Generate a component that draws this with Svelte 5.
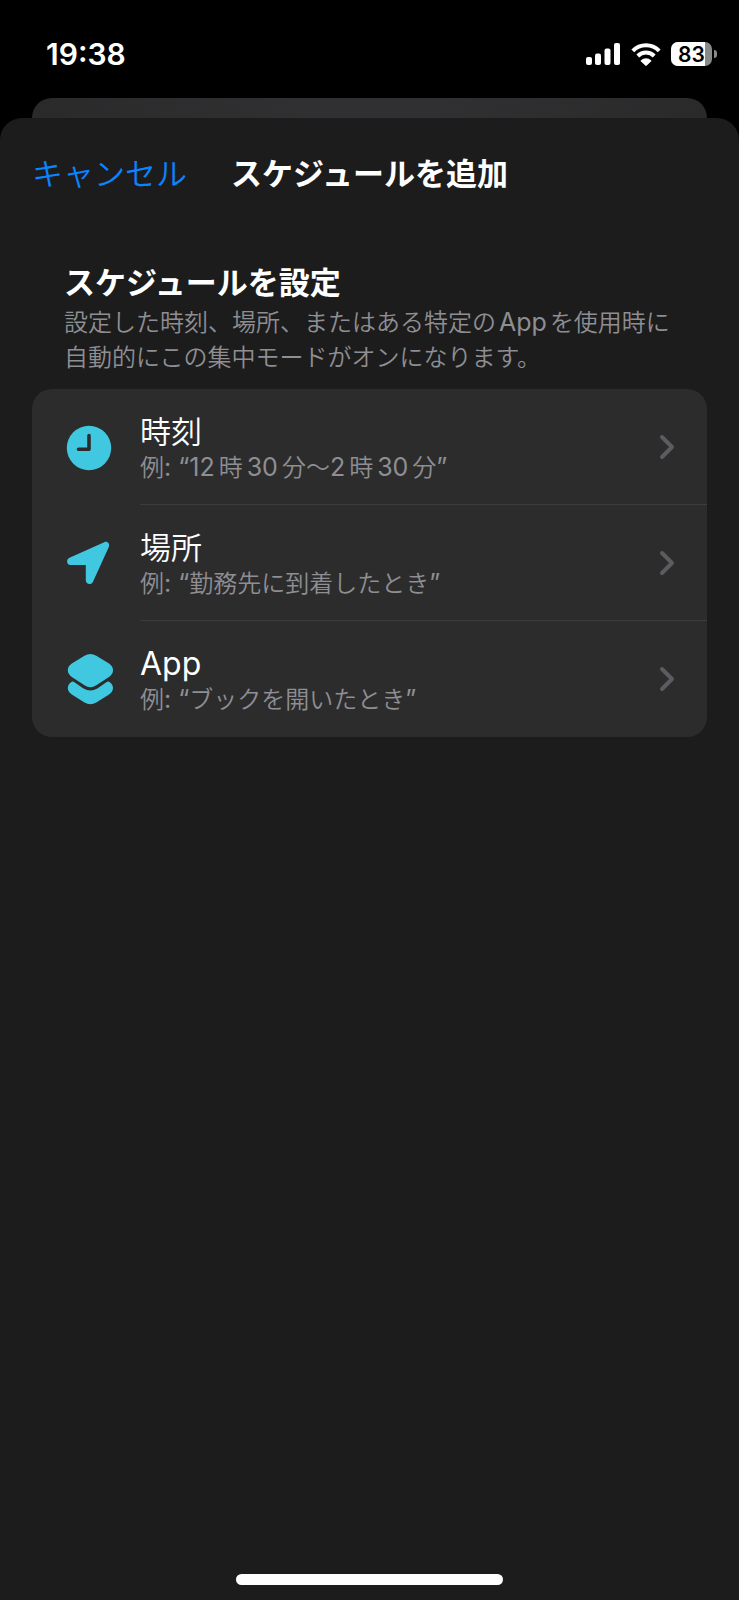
<script lang="ts">
  type Part = { text: string; latin?: boolean; gap?: 'none' | 'after' };
  type Row = { icon: 'clock' | 'location' | 'app'; title: string; latin?: boolean; example: Part[] };

  const time = '19:38';
  const battery = 83;

  // latin runs are set a little larger than the kana and kanji around them
  const rows: Row[] = [
    {
      icon: 'clock',
      title: '時刻',
      example: [
        { text: '例' },
        { text: ': “12', latin: true, gap: 'after' },
        { text: '時' },
        { text: '30', latin: true },
        { text: '分〜' },
        { text: '2', latin: true, gap: 'after' },
        { text: '時' },
        { text: '30', latin: true },
        { text: '分' },
        { text: '”', latin: true, gap: 'none' }
      ]
    },
    {
      icon: 'location',
      title: '場所',
      example: [
        { text: '例' },
        { text: ': “', latin: true, gap: 'none' },
        { text: '勤務先に到着したとき' },
        { text: '”', latin: true, gap: 'none' }
      ]
    },
    {
      icon: 'app',
      title: 'App',
      latin: true,
      example: [
        { text: '例' },
        { text: ': “', latin: true, gap: 'none' },
        { text: 'ブックを開いたとき' },
        { text: '”', latin: true, gap: 'none' }
      ]
    }
  ];
</script>

<div class="screen" lang="ja">
  <header class="status-bar">
    <span class="clock">{time}</span>
    <div class="indicators">
      <svg class="signal" viewBox="0 0 35 22" aria-hidden="true">
        <rect x="0" y="14" width="6" height="8" rx="2" />
        <rect x="9" y="10.500" width="6" height="11.500" rx="2" />
        <rect x="18.500" y="5.500" width="6" height="16.500" rx="2" />
        <rect x="28" y="0" width="6" height="22" rx="2" />
      </svg>
      <svg class="wifi" viewBox="0 0 30 23" aria-hidden="true">
        <path d="M1.800 7.800a18.500 18.500 0 0 1 26.400 0" />
        <path d="M6.800 13a11.500 11.500 0 0 1 16.400 0" />
        <path class="dot" d="M10 17.300a7.300 7.300 0 0 1 10 0q.6.6 0 1.200l-4.300 4.100q-.7.6-1.400 0L10 18.500q-.6-.6 0-1.200z" />
      </svg>
      <div class="battery">
        <div class="battery-body">
          <div class="battery-fill" style="width: {battery}%"></div>
          <span class="battery-level">{battery}</span>
        </div>
        <div class="battery-tip"></div>
      </div>
    </div>
  </header>

  <div class="sheet-behind"></div>

  <main class="sheet">
    <nav class="nav">
      <button type="button" class="cancel">キャンセル</button>
      <h1>スケジュールを追加</h1>
    </nav>

    <section class="intro">
      <h2>スケジュールを設定</h2>
      <p>設定した時刻、場所、またはある特定の<span class="latin">App</span>を使用時に<br />自動的にこの集中モードがオンになります。</p>
    </section>

    <ul class="list">
      {#each rows as row}
        <li>
          <button type="button" class="row">
            <span class="row-icon">
              {#if row.icon === 'clock'}
                <svg viewBox="0 0 48 52" aria-hidden="true">
                  <circle cx="23" cy="27" r="22.200" />
                  <path class="hands" d="M23 14.500V28.200H12.500" />
                </svg>
              {:else if row.icon === 'location'}
                <svg viewBox="0 0 48 52" aria-hidden="true">
                  <path d="M38.200 5.200 3.500 20.700C-.3 22.500.7 28 4.500 28H19.800V43.300C19.800 47.500 25.200 48.500 27 44.800L42.700 10.200C44.200 6.700 41.500 3.700 38.200 5.200Z" />
                </svg>
              {:else}
                <svg viewBox="0 0 48 52" aria-hidden="true">
                  <path d="M18.500 2.800Q24.400-.8 30.300 2.800L43 10.500Q47 13.200 47 17.300Q47 21.200 43 23.900L30.300 32.300Q24.400 36 18.500 32.300L5.800 23.900Q1.800 21.200 1.800 17.300Q1.800 13.200 5.800 10.500Z" />
                  <path d="M5.800 28.700Q7.200 28.300 8.800 29.500L17.500 35.500Q24.400 39.700 31.300 35.500L40 29.500Q41.600 28.300 43 28.700Q47 31 47 35Q47 38.700 43 41.500L30.300 49.500Q24.400 53 18.500 49.500L5.800 41.500Q1.800 38.700 1.800 35Q1.800 31 5.800 28.700Z" />
                </svg>
              {/if}
            </span>
            <span class="row-body">
              <span class="row-text">
                <span class="row-title"><span class:title-latin={row.latin}>{row.title}</span></span>
                <span class="row-example">{#each row.example as part}<span class:latin={part.latin} class:gap-none={part.gap === 'none'} class:gap-after={part.gap === 'after'}>{part.text}</span>{/each}</span>
              </span>
              <svg class="chevron" viewBox="0 0 16 26" aria-hidden="true">
                <path d="M3 3 13 13 3 23" />
              </svg>
            </span>
          </button>
        </li>
      {/each}
    </ul>

    <div class="home-indicator"></div>
  </main>
</div>

<style>
  :global(body) {
    background: #000;
  }

  .screen {
    display: flex;
    flex-direction: column;
    min-height: 100vh;
    background: #000;
    color: #fff;
    font-family: "Noto Sans CJK JP", sans-serif;
  }

  h1,
  h2,
  p,
  ul {
    margin: 0;
    padding: 0;
  }

  button {
    margin: 0;
    padding: 0;
    border: 0;
    background: none;
    color: inherit;
    font: inherit;
    text-align: left;
    cursor: pointer;
  }

  /* status bar */
  .status-bar {
    display: flex;
    align-items: center;
    justify-content: space-between;
    box-sizing: border-box;
    height: 98px;
    padding: 10px 22px 0 46px;
  }

  .clock {
    font: 600 30px/36px Inter, sans-serif;
  }

  .indicators {
    display: flex;
    align-items: center;
    gap: 10px;
  }

  .signal {
    width: 35px;
    height: 22px;
    fill: #fff;
  }

  .wifi {
    width: 30px;
    height: 23px;
    fill: none;
    stroke: #fff;
    stroke-width: 4;
  }

  .wifi .dot {
    fill: #fff;
    stroke: none;
  }

  .battery {
    display: flex;
    align-items: center;
    gap: 2px;
  }

  .battery-body {
    position: relative;
    width: 41px;
    height: 24px;
    border-radius: 7px;
    background: #8a8a8a;
    overflow: hidden;
  }

  .battery-fill {
    height: 100%;
    background: #fff;
  }

  .battery-level {
    position: absolute;
    inset: 0;
    color: #000;
    font: 600 21px/26px Inter, sans-serif;
    text-align: center;
  }

  .battery-tip {
    width: 3px;
    height: 8px;
    border-radius: 0 4px 4px 0;
    background: #8a8a8a;
  }

  /* sheets */
  .sheet-behind {
    height: 20px;
    margin: 0 32px;
    border-radius: 20px 20px 0 0;
    background: linear-gradient(90deg, #2a2a2b, #303032 40%, #303032 60%, #2a2a2b);
  }

  .sheet {
    display: flex;
    flex: 1;
    flex-direction: column;
    border-radius: 22px 22px 0 0;
    background: #1c1c1c;
  }

  .nav {
    display: grid;
    grid-template-columns: 1fr auto 1fr;
    align-items: center;
    height: 108px;
    padding: 0 32px;
  }

  .cancel {
    justify-self: start;
    color: #0a84ff;
    font-size: 31px;
    font-weight: 350;
    line-height: 40px;
    white-space: nowrap;
  }

  h1,
  h2 {
    font-size: 31px;
    font-weight: 700;
    line-height: 40px;
    white-space: nowrap;
  }

  .intro {
    padding: 35px 64px 16px;
  }

  .intro p {
    margin-top: 2px;
    color: #8e8e93;
    font-size: 24px;
    font-weight: 350;
    line-height: 35px;
  }

  .latin {
    margin: 0 3px;
    font-family: Inter, sans-serif;
    font-size: 25px;
    font-weight: 400;
    line-height: 1;
  }

  .row-example .latin {
    margin: 0 4px;
  }

  .row-example .gap-none {
    margin: 0;
  }

  .row-example .gap-after {
    margin: 0 4px 0 0;
  }

  /* options */
  .list {
    margin: 0 32px;
    border-radius: 20px;
    background: #2c2c2c;
    list-style: none;
    overflow: hidden;
  }

  .row {
    display: flex;
    align-items: stretch;
    width: 100%;
    padding-left: 34px;
  }

  .row-icon {
    display: flex;
    align-items: center;
    width: 74px;
  }

  .row-icon svg {
    width: 48px;
    height: 52px;
    fill: #40c8e0;
  }

  .row-icon .hands {
    fill: none;
    stroke: #2c2c2c;
    stroke-width: 3.600;
    stroke-linecap: round;
    stroke-linejoin: round;
  }

  .row-body {
    display: flex;
    flex: 1;
    align-items: center;
    justify-content: space-between;
    box-sizing: border-box;
    height: 116px;
    padding-right: 32px;
    border-bottom: 1px solid #3d3d3f;
  }

  li:last-child .row-body {
    border-bottom-color: transparent;
  }

  .row-text {
    display: flex;
    flex-direction: column;
    padding-top: 2px;
  }

  .row-title {
    font-size: 31px;
    font-weight: 350;
    line-height: 36px;
  }

  .title-latin {
    font-family: Inter, sans-serif;
    font-size: 32px;
    font-weight: 400;
    line-height: 1;
  }

  .row-example {
    color: #8e8e93;
    font-size: 24px;
    font-weight: 350;
    line-height: 35px;
    white-space: nowrap;
  }

  .chevron {
    width: 16px;
    height: 26px;
    fill: none;
    stroke: #5c5c60;
    stroke-width: 4;
    stroke-linecap: round;
    stroke-linejoin: round;
  }

  .home-indicator {
    width: 36%;
    height: 11px;
    margin: auto auto 15px;
    border-radius: 6px;
    background: #fff;
  }
</style>
